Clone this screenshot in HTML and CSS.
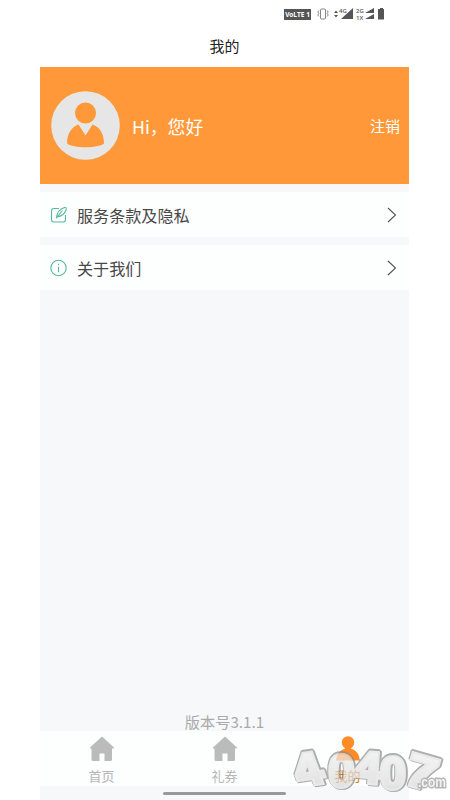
FILE: index.html
```html
<!DOCTYPE html>
<html lang="zh-CN">
<head>
<meta charset="utf-8">
<title>我的</title>
<link rel="stylesheet" href="styles.css">
</head>
<body>
<div class="phone">
  <div class="status">
    <span class="volte">VoLTE 1</span>
    <svg class="vibrate" width="12" height="12" viewBox="0 0 12 12"><rect x="3.5" y="1" width="5" height="10" rx="1"/><path d="M1.8 2.5l-1 1.5 1 1.5-1 1.5 1 1.5M10.2 2.5l1 1.5-1 1.5 1 1.5-1 1.5"/></svg>
    <svg class="signal" width="50" height="14" viewBox="0 0 50 14"><path d="M0 6l2-2.5L4 6zM0 8l2 2.500L4 8zM19 1v11H7zM40 1v5h-9zM40 7v5h-9zM45 2h1V1h3v1h1.500v10.500H44V2z"/><text x="5" y="5.500">4G</text><text x="22" y="6">2G</text><text x="22" y="12.500">1X</text></svg>
  </div>
  <header class="title">我的</header>
  <section class="profile">
    <svg class="avatar" width="70" height="70" viewBox="0 0 70 70"><circle class="disc" cx="35.500" cy="34.500" r="34.300"/><circle cx="35.500" cy="22" r="10.500"/><path d="M17.200 52.500C16.500 43 22 35.500 28.500 33.500L35.500 44.500L42.500 33.500C50 36 54 43 54 52.500C48 57.500 23 57.500 17.200 52.500Z"/></svg>
    <span class="hello">Hi，您好</span>
    <span class="logout">注销</span>
  </section>
  <a class="row">
    <svg class="icon" width="18" height="18" viewBox="0 0 18 18"><path d="M9 2.500H4Q1.500 2.500 1.500 5v8.500Q1.500 16 4 16h9q2.500 0 2.500-2.500V9M6.500 11.500C7 7 10 3 14.500 1.500Q17 1 16 4Q14 9.500 8 10.800M6 12.500L12.500 4.500"/></svg>
    <span>服务条款及隐私</span>
    <svg class="chevron" width="10" height="16" viewBox="0 0 10 16"><path d="M1 1l7.500 7L1 15"/></svg>
  </a>
  <a class="row about">
    <svg class="icon" width="18" height="18" viewBox="0 0 18 18"><circle cx="8.500" cy="9" r="7.700"/><path d="M8.500 7.800v5.500M8.500 4.800v1.400"/></svg>
    <span>关于我们</span>
    <svg class="chevron" width="10" height="16" viewBox="0 0 10 16"><path d="M1 1l7.500 7L1 15"/></svg>
  </a>
  <div class="version">版本号3.1.1</div>
  <nav class="tabs">
    <a class="tab"><svg width="26" height="26" viewBox="0 0 26 26"><path d="M13 .5L25 11.500V12.500H23V23.500Q23 25 21.500 25H15.500V17.500H10.500V25H4Q2.500 25 2.500 23.500V12.500H1V11.500Z"/></svg><span>首页</span></a>
    <a class="tab"><svg width="26" height="26" viewBox="0 0 26 26"><path d="M13 .5L25 11.500V12.500H23V23.500Q23 25 21.500 25H15.500V17.500H10.500V25H4Q2.500 25 2.500 23.500V12.500H1V11.500Z"/></svg><span>礼券</span></a>
    <a class="tab active"><svg width="26" height="26" viewBox="0 0 26 26"><circle cx="13" cy="6.500" r="6.300"/><path d="M1 24.500Q2 15 10 12.500V11h6v1.500Q24 15 25 24.500Z"/></svg><span>我的</span></a>
  </nav>
  <div class="home-bar"></div>
</div>
<svg class="watermark" width="162" height="60" viewBox="288 740 162 60">
  <defs><linearGradient id="g" x1="0" y1="0" x2="0" y2="1"><stop offset="0" stop-color="#f4f4f4"/><stop offset="1" stop-color="#d2d2d2"/></linearGradient></defs>
  <g class="digits">
    <text transform="translate(300 786) rotate(-8) skewX(12) scale(1.150 1.080)">4</text>
    <text transform="translate(354 782) rotate(4) scale(1.120 1.050)">4</text>
    <text class="zero" transform="translate(328.500 787) scale(1.050 1.050)">0</text>
    <text class="zero" transform="translate(380 789) scale(1.050 1.050)">0</text>
    <text transform="translate(403 783) rotate(16) scale(1.300 1.080)">7</text>
  </g>
  <text class="domain" x="418" y="787" textLength="28" lengthAdjust="spacingAndGlyphs">.com</text>
</svg>
</body>
</html>
```
FILE: styles.css
```css
body { margin: 0; width: 450px; height: 800px; position: relative; overflow: hidden; background: #fff; font-family: "Noto Sans CJK SC", sans-serif; }
.phone { width: 369px; height: 800px; margin-left: 40px; display: flex; flex-direction: column; background: #f7f8fa; }
.status { height: 28px; flex: none; background: #fff; display: flex; align-items: center; padding-left: 244px; gap: 5px; }
.volte { width: 27px; height: 11px; background: #555; color: #fff; font: bold 6.5px/11px "Open Sans", sans-serif; text-align: center; white-space: nowrap; }
.vibrate { fill: none; stroke: #666; stroke-width: .8; margin-left: 1px; }
.signal { fill: #555; }
.signal text { font: 600 6px "Open Sans", sans-serif; }
.title { height: 39px; flex: none; background: #fff; text-align: center; font-size: 15px; line-height: 36px; color: #222; }
.profile { height: 117px; flex: none; background: #ff9838; color: #fff; display: flex; align-items: center; padding: 0 9px 0 10px; box-sizing: border-box; }
.avatar { fill: #ff9838; }
.disc { fill: #e6e6e6; }
.hello { margin-left: 12px; font-size: 17.8px; }
.logout { margin-left: auto; font-size: 15px; }
.row { height: 45px; flex: none; margin-top: 8px; background: #fdfefe; display: flex; align-items: center; padding: 0 12px 0 10px; font-size: 16.1px; color: #484848; }
.icon { fill: none; stroke: #55b998; stroke-width: 1.1; margin-right: 9px; }
.chevron { margin-left: auto; fill: none; stroke: #555; stroke-width: 1.1; }
.version { margin-top: auto; height: 21px; line-height: 23px; text-align: center; font-size: 15.2px; color: #aaa; }
.tabs { height: 55px; flex: none; background: #fdfefe; display: flex; }
.tab { flex: 1; display: flex; flex-direction: column; align-items: center; padding-top: 5px; font-size: 13px; line-height: 28px; color: #b5b5b5; fill: #bbb; }
.tab svg { flex: none; }
.active { color: #e07000; fill: #ff8c24; }
.home-bar { width: 123px; height: 3px; flex: none; margin: 6px auto 5px; background: #999; border-radius: 2px; }
.watermark { position: absolute; left: 288px; top: 740px; opacity: .7; }
.digits { filter: drop-shadow(1px 1px 0 #8c8c8c) drop-shadow(-1px -1px 0 #8c8c8c) drop-shadow(1px -1px 0 #8c8c8c); }
.digits text { font: bold 42px "Liberation Sans", sans-serif; fill: url(#g); stroke: #e2e2e2; stroke-width: 4px; paint-order: stroke; }
.digits .zero { font-size: 44px; }
.domain { font: bold 15px "Liberation Sans", sans-serif; fill: #eee; stroke: #999; stroke-width: 3px; paint-order: stroke; }
```
